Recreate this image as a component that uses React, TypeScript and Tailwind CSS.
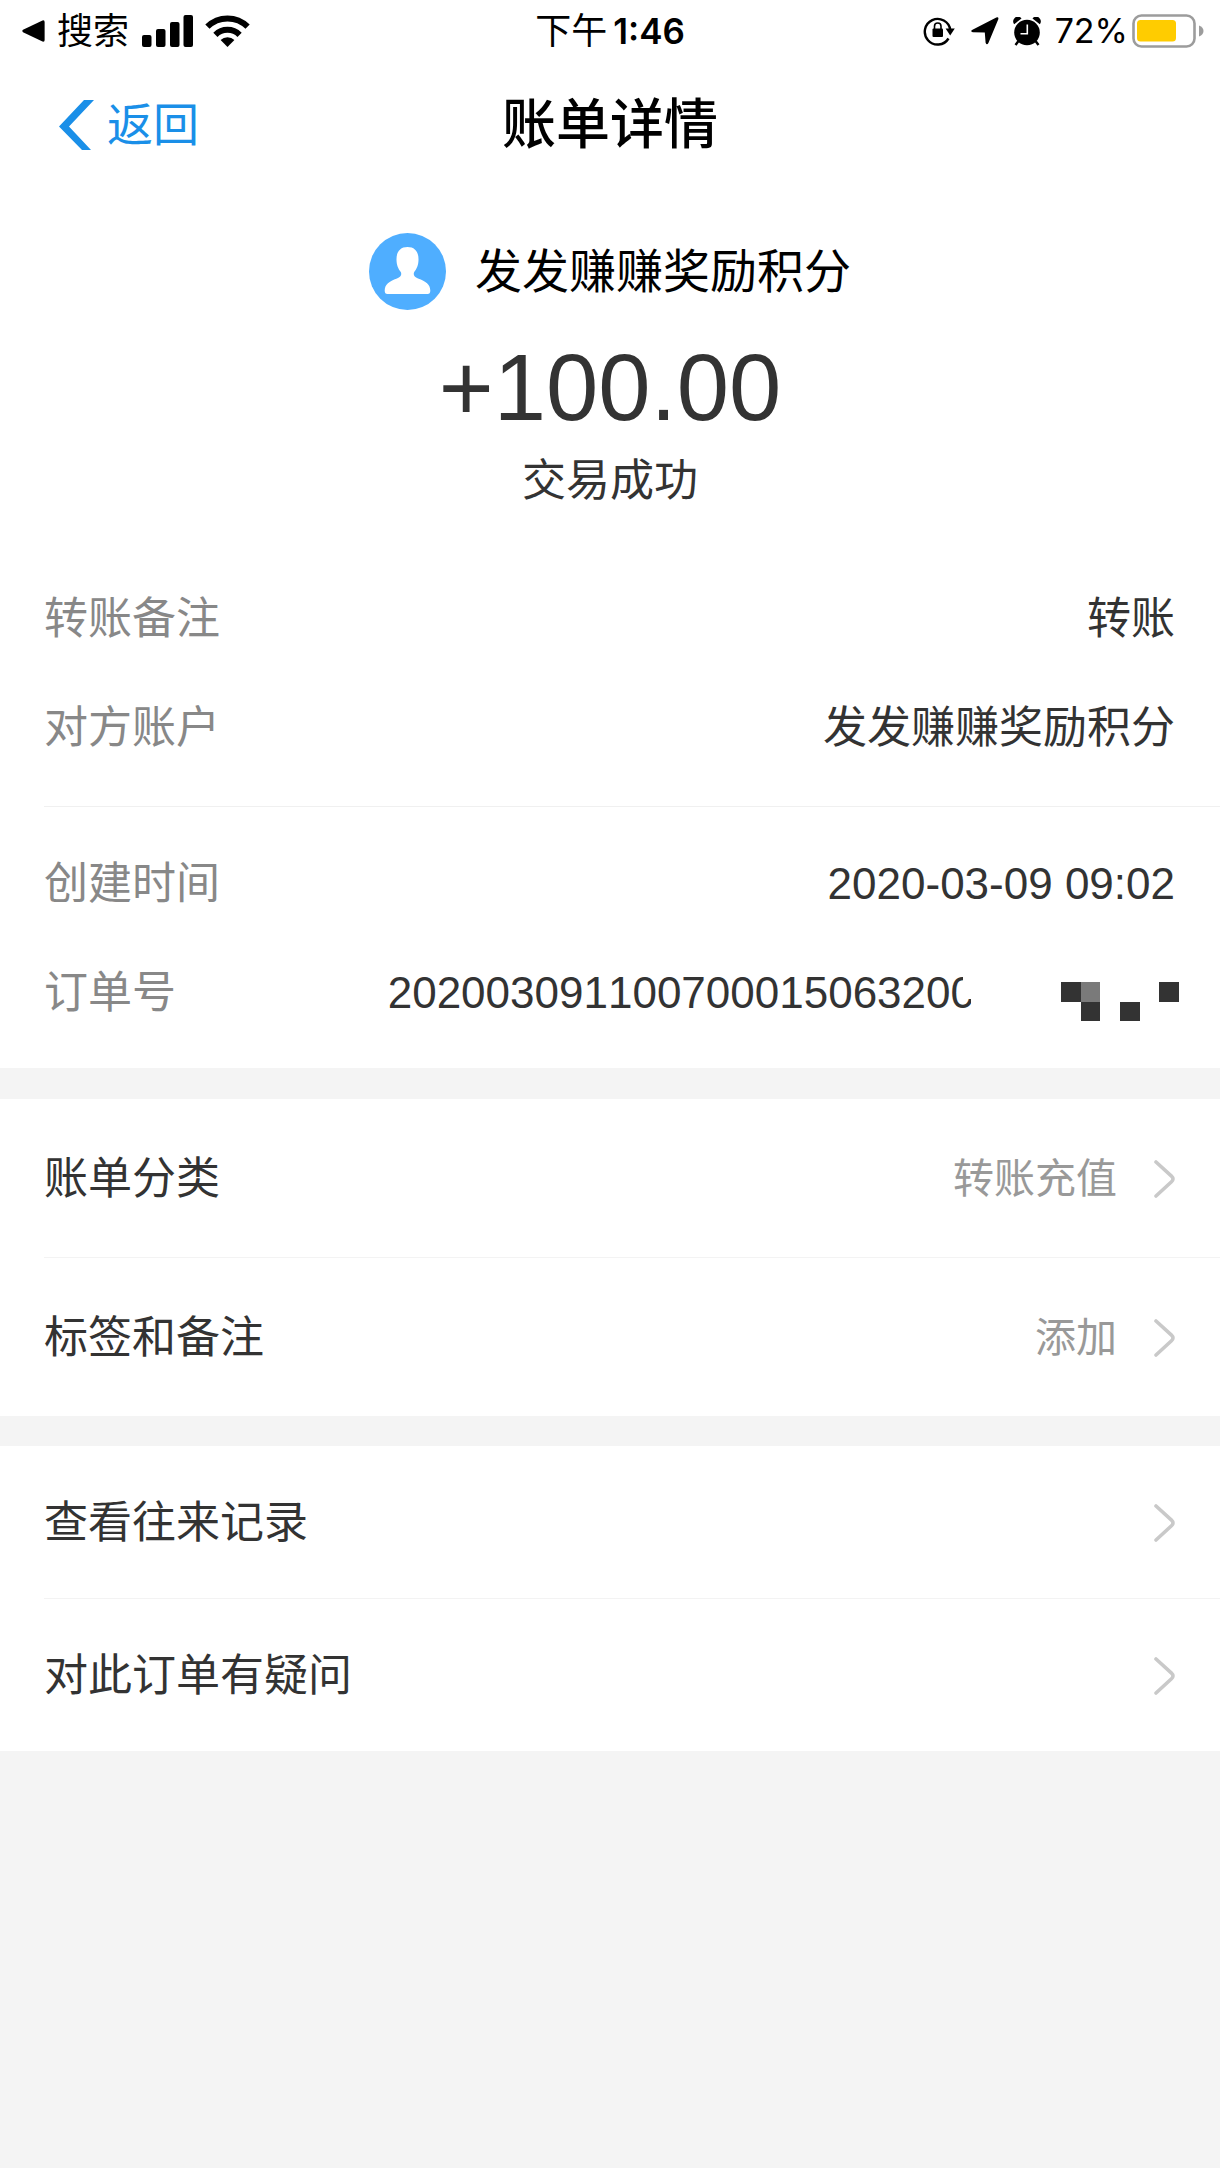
import React from "react";

interface DetailItem {
  label: string;
  value: React.ReactNode;
}

interface ActionItem {
  label: string;
  value?: string;
}

const transferDetails: DetailItem[] = [
  { label: "转账备注", value: "转账" },
  { label: "对方账户", value: "发发赚赚奖励积分" },
];

const orderDetails: DetailItem[] = [
  { label: "创建时间", value: "2020-03-09 09:02" },
  { label: "订单号", value: <OrderNumber /> },
];

const billActions: ActionItem[] = [
  { label: "账单分类", value: "转账充值" },
  { label: "标签和备注", value: "添加" },
];

const helpActions: ActionItem[] = [
  { label: "查看往来记录" },
  { label: "对此订单有疑问" },
];

// The last digits are hidden behind a pixel mask
function OrderNumber() {
  return (
    <span className="-mr-1 flex items-center justify-end">
      <span className="[font-kerning:none]">202003091100700015063200</span>
      <svg
        className="relative mt-1.5 -ml-3 h-[50px] w-[216px] shrink-0"
        viewBox="0 0 216 50"
        shapeRendering="crispEdges"
        aria-hidden="true"
      >
        <path d="M0 0H216V50H8V28H0Z" fill="#fff" />
        <rect x="98" y="11" width="20" height="20" fill="#333" />
        <rect x="118" y="11" width="19" height="20" fill="#7a7a7a" />
        <rect x="118" y="31" width="19" height="19" fill="#333" />
        <rect x="157" y="31" width="20" height="19" fill="#333" />
        <rect x="196" y="11" width="20" height="20" fill="#333" />
      </svg>
    </span>
  );
}

function StatusBar() {
  return (
    <div className="grid grid-cols-[1fr_auto_1fr] items-center px-4 pt-0.5 font-['Inter','Noto_Sans_CJK_SC',sans-serif] leading-[58px] text-black">
      <div className="flex items-center pl-1.5">
        <svg className="h-[22px] w-[23px]" viewBox="0 0 23 22" aria-hidden="true">
          <path d="M1 9.8 20.5.4Q22.6-.3 22.6 2v18q0 2.300-2.100 1.600L1 12.200Q-.4 11 1 9.800Z" />
        </svg>
        <span className="ml-3 text-[36px]">搜索</span>
        {/* Signal */}
        <svg className="ml-[13px] h-[32px] w-[52px]" viewBox="0 0 52 32" aria-hidden="true">
          <rect x="0" y="20" width="9.500" height="12" rx="2" />
          <rect x="14" y="14" width="9.500" height="18" rx="2" />
          <rect x="28" y="7" width="9.500" height="25" rx="2" />
          <rect x="41.500" y="0" width="9.500" height="32" rx="2" />
        </svg>
        {/* Wifi */}
        <svg className="ml-[11px] h-[32px] w-[45px]" viewBox="0 0 45 32" aria-hidden="true">
          <path d="M22.500 32 15.600 25a10 10 0 0 1 13.800 0Z" />
          <path
            d="M10.400 19.800a17.300 17.300 0 0 1 24.200 0M2.400 11.700a28.600 28.600 0 0 1 40.200 0"
            fill="none"
            stroke="#000"
            strokeWidth="6"
          />
        </svg>
      </div>

      <div className="flex items-center">
        <span className="text-[36px]">下午</span>
        <span className="ml-1.5 text-[35px] font-semibold">1:46</span>
      </div>

      <div className="flex items-center justify-end">
        {/* Rotation lock */}
        <svg className="h-[30px] w-[32px]" viewBox="0 0 32 30" aria-hidden="true">
          <path
            d="M25.500 22.500A12.800 12.800 0 1 1 27.300 14"
            fill="none"
            stroke="#000"
            strokeWidth="2.400"
          />
          <path d="M22.600 12.400h9.200l-4.600 7.100Z" />
          <rect x="9.500" y="12.500" width="10.500" height="8.500" rx="1" />
          <path
            d="M11.500 13v-2.700a3.200 3.200 0 0 1 6.500 0V13"
            fill="none"
            stroke="#000"
            strokeWidth="1.600"
          />
        </svg>
        {/* Location */}
        <svg className="ml-4 h-[28px] w-[28px]" viewBox="0 0 28 28" aria-hidden="true">
          <path d="M1 13.100 25.300.5q2.600-.9 2 1.800L17.400 26q-1.500 2.700-2.800-.2L13.800 15.500 1.800 15.200Q-.8 14.500 1 13.100Z" />
        </svg>
        {/* Alarm */}
        <svg className="ml-[14px] h-[29px] w-[28px]" viewBox="0 0 28 29" aria-hidden="true">
          <circle cx="14" cy="15.500" r="12.800" />
          <path d="M1.200 7.300A4.300 4.300 0 0 1 8.500 1.400ZM26.800 7.300A4.300 4.300 0 0 0 19.500 1.400Z" />
          <path d="M5.500 24 2.500 28M22.500 24l3 4" stroke="#000" strokeWidth="2.400" />
          <path d="M14.300 7.500v9.300H7.500" fill="none" stroke="#fff" strokeWidth="1.600" />
        </svg>
        <span className="ml-3.5 text-[34px]">72%</span>
        {/* Battery */}
        <svg className="ml-1 h-[34px] w-[72px]" viewBox="0 0 72 34" aria-hidden="true">
          <rect
            x="1.500"
            y="1.500"
            width="61"
            height="31"
            rx="8"
            fill="#fff"
            stroke="#9c9c9c"
            strokeWidth="2.600"
          />
          <rect x="5" y="6" width="39" height="21.500" rx="3.500" fill="#ffcc00" />
          <path d="M67 11.500q4.500 1.800 4.500 5.500t-4.500 5.500Z" fill="#9c9c9c" />
        </svg>
      </div>
    </div>
  );
}

function Details({ items }: { items: DetailItem[] }) {
  return (
    <dl className="flex flex-col gap-11 pr-[45px] text-[44px] leading-[65px]">
      {items.map((item) => (
        <div key={item.label} className="flex items-center justify-between">
          <dt className="text-[#888]">{item.label}</dt>
          <dd className="text-[#333]">{item.value}</dd>
        </div>
      ))}
    </dl>
  );
}

function Actions({ items, rowClass }: { items: ActionItem[]; rowClass: string }) {
  return (
    <ul className="divide-y divide-[#f3f3f3] bg-white pl-[44px]">
      {items.map((item) => (
        <li key={item.label}>
          <button
            type="button"
            className={`flex w-full items-center justify-between pr-[45px] text-left text-[44px] leading-[64px] text-[#333] ${rowClass}`}
          >
            <span>{item.label}</span>
            <span className="flex items-center gap-[37px] text-[41px] text-[#999]">
              {item.value}
              <svg className="h-[38px] w-[21px]" viewBox="0 0 21 38" aria-hidden="true">
                <path
                  d="M2 2 17.500 16.200Q20.500 19 17.500 21.800L2 36"
                  fill="none"
                  stroke="#c9c9c9"
                  strokeWidth="3.600"
                  strokeLinecap="round"
                />
              </svg>
            </span>
          </button>
        </li>
      ))}
    </ul>
  );
}

export default function App() {
  return (
    <div className="min-h-screen bg-[#f4f4f4] font-['Liberation_Sans','Noto_Sans_CJK_SC',sans-serif]">
      <header className="bg-white">
        <StatusBar />
        <nav className="grid grid-cols-[1fr_auto_1fr] items-center px-[58px] pt-[26px]">
          <button
            type="button"
            className="flex items-center justify-self-start text-[46px] leading-[78px] text-[#1a8fe8]"
          >
            <svg className="mr-[13px] h-[50px] w-[36px]" viewBox="0 0 36 50" aria-hidden="true">
              <path d="M26 0h10L11 26.500 33 50H24L1 26.500Z" fill="#1a8fe8" />
            </svg>
            返回
          </button>
          <h1 className="text-[54px] leading-[78px] font-medium text-black">账单详情</h1>
        </nav>
      </header>

      <main>
        <section className="bg-white pt-[69px] pb-[43px]">
          <div className="flex flex-col items-center">
            <div className="flex items-center gap-[29px]">
              <svg className="size-[77px]" viewBox="0 0 77 77" aria-hidden="true">
                <circle cx="38.500" cy="38.500" r="38.500" fill="#4faeff" />
                <path
                  d="M38.500 14c7.500 0 11.300 5 11 13-.2 5.500-1.600 8.500-4.300 12-1.200 3 0 5 3.800 6.500 8 3 12 5.500 12.300 12 0 2.500-.8 3.500-2.800 3.500H18.500c-2 0-2.800-1-2.800-3.500.3-6.500 4.300-9 12.300-12 3.800-1.500 5-3.500 3.800-6.500-2.700-3.500-4.100-6.500-4.300-12-.3-8 3.500-13 11-13Z"
                  fill="#fff"
                />
              </svg>
              <h2 className="text-[47px] leading-[77px] text-black">发发赚赚奖励积分</h2>
            </div>
            <p className="mt-6 text-[94px] leading-[108px] text-[#333]">+100.00</p>
            <p className="mt-1.5 text-[44px] leading-[65px] text-[#333]">交易成功</p>
          </div>

          <div className="mt-[73px] pl-[44px]">
            <Details items={transferDetails} />
            <div className="mt-[46px] mb-11 border-t border-[#f0f0f0]" />
            <Details items={orderDetails} />
          </div>
        </section>

        <section className="mt-[31px]">
          <Actions items={billActions} rowClass="pt-[48px] pb-[46px]" />
        </section>

        <section className="mt-[30px]">
          <Actions items={helpActions} rowClass="pt-[45px] pb-[43px]" />
        </section>
      </main>
    </div>
  );
}
